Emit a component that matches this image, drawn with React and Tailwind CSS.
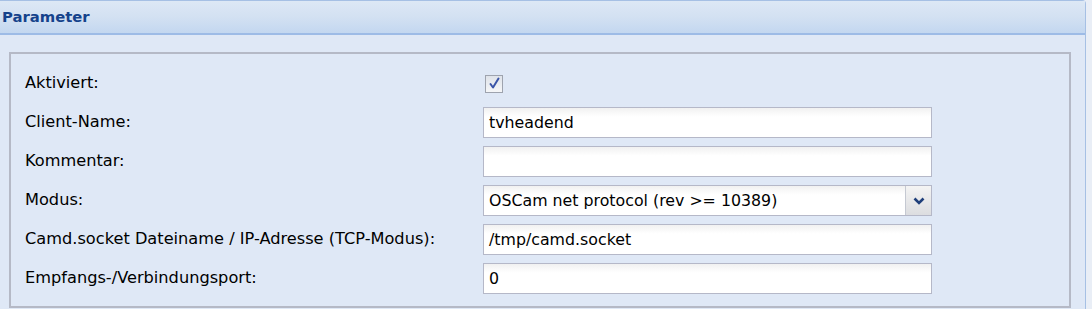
import React from 'react';

const ROWS = [
  { label: 'Aktiviert:', type: 'check' },
  { label: 'Client-Name:', type: 'text', value: 'tvheadend' },
  { label: 'Kommentar:', type: 'text', value: '' },
  { label: 'Modus:', type: 'select', value: 'OSCam net protocol (rev >= 10389)' },
  { label: 'Camd.socket Dateiname / IP-Adresse (TCP-Modus):', type: 'text', value: '/tmp/camd.socket' },
  { label: 'Empfangs-/Verbindungsport:', type: 'text', value: '0' },
];

function CheckBox() {
  return (
    <div className="ml-[2px] w-[18px] h-[18px] border border-[#9ea3ae] bg-gradient-to-b from-[#dfe3ea] to-[#f5f6f8] flex items-center justify-center">
      <svg width="13" height="13" viewBox="0 0 13 13">
        <path d="M2.5 7 L5 10.5 L10.5 1.5" fill="none" stroke="#3b55a8" strokeWidth="2" strokeLinecap="round" strokeLinejoin="round" />
      </svg>
    </div>
  );
}

function TextField({ value }) {
  return (
    <div className="w-[449px] h-[31px] border border-[#b5b8c8] bg-gradient-to-b from-[#f1f1f1] to-white to-[30%] flex items-center px-[5px] text-[15.8px] text-black">
      {value}
    </div>
  );
}

function SelectField({ value }) {
  return (
    <div className="w-[449px] h-[31px] border border-[#b5b8c8] flex">
      <div className="flex-1 bg-gradient-to-b from-[#f1f1f1] to-white to-[30%] flex items-center px-[5px] text-[15.8px] text-black">
        {value}
      </div>
      <div className="w-[26px] border-l border-[#c5c9d2] bg-gradient-to-b from-[#f4f4f4] to-[#dcdde0] flex items-center justify-center">
        <svg width="12" height="8" viewBox="0 0 12 8">
          <path d="M1.5 1.5 L6 6 L10.5 1.5" fill="none" stroke="#1f3f7a" strokeWidth="2.6" strokeLinejoin="miter" />
        </svg>
      </div>
    </div>
  );
}

export default function App() {
  return (
    <div className="w-[1092px] h-[309px] bg-[#e9eef6] overflow-hidden" style={{ fontFamily: '"DejaVu Sans", Verdana, sans-serif' }}>
      <div className="w-[1086px] h-[309px] bg-[#dfe8f6] border-t border-r border-[#a6c0e4] rounded-tr-[4px] flex flex-col">
        {/* header */}
        <div className="h-[34px] flex-shrink-0 border-b-2 border-[#9dbbe6] bg-gradient-to-b from-[#dde8f5] via-[#d3e1f2] to-[#c3d7f0] flex items-center pl-[2px]">
          <span className="text-[14.8px] font-bold text-[#15428b]">Parameter</span>
        </div>

        {/* fieldset */}
        <div className="ml-[9px] mt-[17px] w-[1062px] h-[256px] border-2 border-[#b5b9c6] pt-[10px] pl-[14px]">
          {ROWS.map(row => (
            <div key={row.label} className="h-[39px] flex items-center">
              <div className="w-[458px] text-[16.2px] text-black">{row.label}</div>
              {row.type === 'check' && <CheckBox />}
              {row.type === 'text' && <TextField value={row.value} />}
              {row.type === 'select' && <SelectField value={row.value} />}
            </div>
          ))}
        </div>
      </div>
    </div>
  );
}
